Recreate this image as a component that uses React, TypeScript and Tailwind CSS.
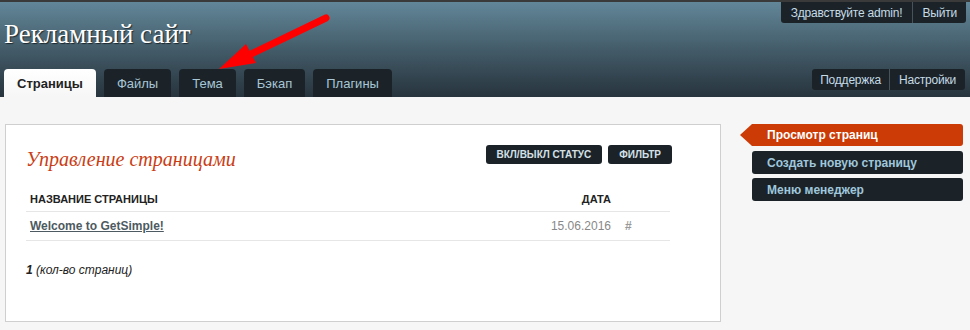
import React from 'react';

const tabs = ['Страницы', 'Файлы', 'Тема', 'Бэкап', 'Плагины'];

export default function App() {
  return (
    <div className="relative w-[970px] h-[330px] overflow-hidden bg-[#f6f6f6] font-['Liberation_Sans',Arial,sans-serif]">
      {/* Header */}
      <div className="relative h-[97px] border-t-2 border-[#3a3a3a] bg-gradient-to-b from-[#628799] to-[#27343d]">
        <div className="absolute right-[4px] top-0 flex h-[21px] items-center rounded-b-[3px] bg-[#1b2329] text-[12px] tracking-[-0.2px] text-[#c5dbe6]">
          <span className="px-[10px]">Здравствуйте admin!</span>
          <span className="h-full w-px bg-[#46535b]" />
          <span className="px-[9px]">Выйти</span>
        </div>
        <div className="pl-[4px] pt-[17px] font-['Liberation_Serif',Georgia,serif] text-[27px] leading-[30px] text-white [text-shadow:1px_1px_1px_rgba(0,0,0,0.6)]">
          Рекламный сайт
        </div>
        <div className="absolute bottom-0 left-[4px] flex gap-[8px]">
          {tabs.map((t, i) => (
            <div
              key={t}
              className={
                i === 0
                  ? 'flex h-[28px] items-center rounded-t-[4px] bg-gradient-to-b from-white to-[#f6f6f6] px-[13px] pt-[2px] text-[13px] font-bold text-[#222]'
                  : 'flex h-[28px] items-center rounded-t-[4px] bg-[#1b2329] px-[13px] pt-[2px] text-[13px] text-[#a8c6d6]'
              }
            >
              {t}
            </div>
          ))}
        </div>
        <div className="absolute right-[5px] top-[67px] flex h-[21px] items-center rounded-[3px] bg-[#1b2329] text-[12px] tracking-[-0.2px] text-[#c5dbe6]">
          <span className="px-[8px]">Поддержка</span>
          <span className="h-full w-px bg-[#46535b]" />
          <span className="px-[9px]">Настройки</span>
        </div>
      </div>

      {/* Body */}
      <div className="flex items-start pl-[5px] pt-[27px]">
        <div className="h-[198px] w-[716px] border border-[#cfcfcf] bg-white pl-[20px] pr-[48px] pt-[20px]">
          <div className="flex items-start justify-between">
            <div className="pt-[2px] font-['Liberation_Serif',Georgia,serif] text-[20px] italic leading-[24px] text-[#c93d14]">
              Управление страницами
            </div>
            <div className="flex gap-[6px]">
              <div className="flex h-[19px] items-center rounded-[3px] bg-[#1b2329] px-[11px] text-[10px] font-bold text-[#d5e0e6]">
                ВКЛ/ВЫКЛ СТАТУС
              </div>
              <div className="flex h-[19px] items-center rounded-[3px] bg-[#1b2329] px-[11px] text-[10px] font-bold text-[#d5e0e6]">
                ФИЛЬТР
              </div>
            </div>
          </div>
          <div className="mr-[2px]">
            <div className="mt-[17px] flex h-[24px] items-center border-b border-[#e6e6e6] pl-[4px] text-[11px] font-bold text-[#222]">
              <span className="flex-1">НАЗВАНИЕ СТРАНИЦЫ</span>
              <span className="w-[60px] text-right">ДАТА</span>
              <span className="w-[59px]" />
            </div>
            <div className="flex h-[29px] items-center border-b border-[#e6e6e6] pl-[4px] text-[12px]">
              <span className="flex-1 font-bold text-[#4d5a61] underline">Welcome to GetSimple!</span>
              <span className="w-[80px] text-right text-[#888]">15.06.2016</span>
              <span className="w-[59px] pl-[14px] text-[#999] font-bold">#</span>
            </div>
          </div>
          <div className="mt-[20px] text-[12px] italic text-[#222]">
            <b>1</b> (кол-во страниц)
          </div>
        </div>

        <div className="ml-[31px] flex w-[211px] flex-col gap-[5px]">
          <div className="relative flex h-[22px] items-center rounded-r-[3px] bg-[#cc3a05] pl-[15px] text-[12px] font-bold text-white">
            <span className="absolute left-[-12px] top-0 h-0 w-0 border-y-[11px] border-r-[12px] border-y-transparent border-r-[#cc3a05]" />
            Просмотр страниц
          </div>
          <div className="flex h-[23px] items-center rounded-[3px] bg-[#1b2329] pl-[15px] text-[12px] font-bold text-[#9fc7dc]">
            Создать новую страницу
          </div>
          <div className="-mt-[1px] flex h-[23px] items-center rounded-[3px] bg-[#1b2329] pl-[15px] text-[12px] font-bold text-[#9fc7dc]">
            Меню менеджер
          </div>
        </div>
      </div>

      {/* Annotation arrow */}
      <svg className="absolute left-0 top-0" width="970" height="330" viewBox="0 0 970 330">
        <line x1="326" y1="18" x2="245" y2="57" stroke="#ff0000" strokeWidth="7" strokeLinecap="round" />
        <polygon points="219,69 246,44 256,63" fill="#ff0000" />
      </svg>
    </div>
  );
}
